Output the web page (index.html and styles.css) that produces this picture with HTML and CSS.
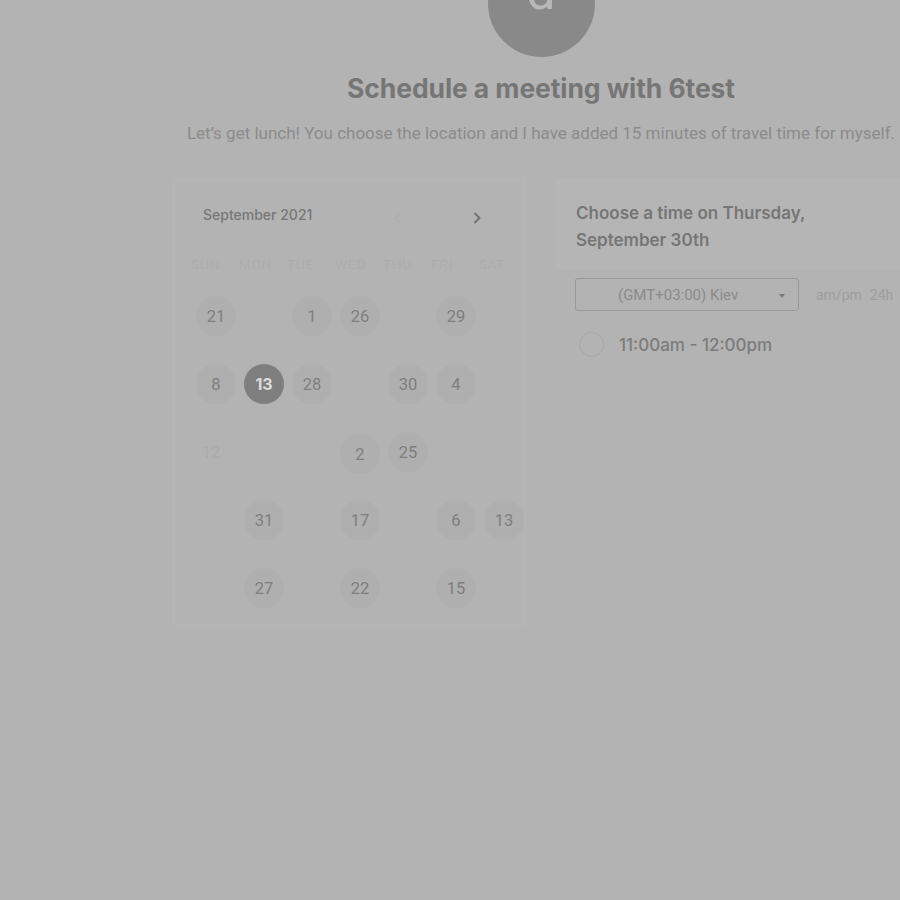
FILE: index.html
```html
<!DOCTYPE html>
<html>
<head>
<meta charset="utf-8">
<link rel="stylesheet" href="styles.css">
</head>
<body>
<div class="page">
  <header class="intro">
    <div class="avatar"><span>d</span></div>
    <h1 class="title">Schedule a meeting with 6test</h1>
    <p class="subtitle">Let’s get lunch! You choose the location and I have added 15 minutes of travel time for myself.</p>
  </header>
  <div class="main">
    <section class="calendar">
      <div class="cal-head">
        <span class="month">September 2021</span>
        <span class="nav prev"><svg width="8" height="12" viewBox="0 0 8 12"><path d="M6.5 1 1.5 6l5 5" fill="none" stroke="currentColor" stroke-width="1.6"/></svg></span>
        <span class="nav next"><svg width="8" height="12" viewBox="0 0 8 12"><path d="M1.5 1l5 5-5 5" fill="none" stroke="currentColor" stroke-width="1.8"/></svg></span>
      </div>
      <div class="grid">
        <div class="wd">SUN</div><div class="wd">MON</div><div class="wd">TUE</div><div class="wd">WED</div><div class="wd">THU</div><div class="wd">FRI</div><div class="wd">SAT</div>

        <div class="day">21</div><div class="empty"></div><div class="day">1</div><div class="day">26</div><div class="empty"></div><div class="day">29</div><div class="empty"></div>

        <div class="day">8</div><div class="day sel">13</div><div class="day">28</div><div class="empty"></div><div class="day">30</div><div class="day">4</div><div class="empty"></div>

        <div class="day off">12</div><div class="empty"></div><div class="empty"></div><div class="day low">2</div><div class="day">25</div><div class="empty"></div><div class="empty"></div>

        <div class="empty"></div><div class="day">31</div><div class="empty"></div><div class="day">17</div><div class="empty"></div><div class="day">6</div><div class="day">13</div>

        <div class="empty"></div><div class="day">27</div><div class="empty"></div><div class="day">22</div><div class="empty"></div><div class="day">15</div><div class="empty"></div>
      </div>
    </section>
    <section class="times">
      <div class="times-head">Choose a time on Thursday,<br>September 30th</div>
      <div class="tz-row">
        <div class="select">(GMT+03:00) Kiev<span class="caret"></span></div>
        <div class="fmt"><span>am/pm</span><span>24h</span></div>
      </div>
      <div class="slot"><span class="radio"></span><span class="slot-text">11:00am - 12:00pm</span></div>
    </section>
  </div>
</div>
</body>
</html>
```
FILE: styles.css
```css
html, body {
  margin: 0;
  padding: 0;
  background: #b3b3b3;
  overflow: hidden;
  height: 900px;
}
.page {
  width: 1082px;
  font-family: Inter, "Noto Sans", sans-serif;
}
.intro {
  display: flex;
  flex-direction: column;
  align-items: center;
}
.avatar {
  width: 107px;
  height: 107px;
  margin-top: -50px;
  border-radius: 50%;
  background: #898989;
  display: flex;
  justify-content: center;
  align-items: flex-start;
  overflow: hidden;
}
.avatar span {
  font-family: Roboto, sans-serif;
  font-size: 52px;
  line-height: 1;
  color: #b8b8b8;
  margin-top: 16px;
}
.title {
  margin: 14px 0 0;
  font-size: 26.5px;
  font-weight: 700;
  color: #767676;
  line-height: 34px;
  letter-spacing: -0.1px;
}
.subtitle {
  margin: 18px 0 0;
  font-family: Roboto, sans-serif;
  font-size: 17px;
  color: #8b8b8b;
  line-height: 20px;
}
.main {
  display: flex;
  margin: 36px 0 0 173px;
  gap: 32px;
  align-items: flex-start;
}
.calendar {
  width: 350px;
  height: 445px;
  border: 1px solid #b7b7b7;
  box-sizing: content-box;
}
.cal-head {
  display: flex;
  align-items: center;
  height: 30px;
  margin-top: 19px;
  padding-left: 29px;
}
.month {
  font-size: 14px;
  font-weight: 500;
  color: #777;
  width: 191px;
}
.nav {
  display: flex;
  align-items: center;
  margin-top: 8px;
}
.prev { color: #aeaeae; }
.next { color: #707070; margin-left: 71px; }
.grid {
  display: grid;
  grid-template-columns: repeat(7, 48px);
  grid-template-rows: 33px;
  grid-auto-rows: 68px;
  margin: 27px 0 0 18px;
}
.grid .wd {
  height: 26px;
  align-self: start;
  font-family: Roboto, sans-serif;
  font-size: 13.5px;
  font-weight: 300;
  letter-spacing: 1px;
  color: #ababab;
  margin-left: -1px;
}
.day, .empty {
  width: 40px;
  height: 40px;
  justify-self: center;
  align-self: start;
  margin-top: 7px;
}
.day {
  border-radius: 50%;
  background: #afafaf;
  display: flex;
  align-items: center;
  justify-content: center;
  font-family: Roboto, sans-serif;
  font-size: 16.5px;
  color: #7e7e7e;
}
.day.sel {
  background: #7e7e7e;
  color: #dcdcdc;
  font-family: Inter, sans-serif;
  font-weight: 700;
  font-size: 16px;
}
.day.off {
  background: transparent;
  color: #aaaaaa;
  margin-left: -10px;
}
.day.low { margin-top: 9px; }
.times {
  flex: 1;
}
.times-head {
  padding: 20px 19px 14px 18px;
  font-size: 17px;
  font-weight: 600;
  line-height: 27px;
  color: #767676;
  background: #b5b5b5;
  border: 1px solid #b7b7b7;
}
.tz-row {
  display: flex;
  align-items: center;
  margin: 9px 0 0 18px;
}
.select {
  width: 224px;
  height: 33px;
  border: 1px solid #979797;
  border-radius: 3px;
  display: flex;
  align-items: center;
  padding-left: 42px;
  box-sizing: border-box;
  position: relative;
  font-family: Roboto, sans-serif;
  font-size: 15px;
  color: #8a8a8a;
}
.caret {
  position: absolute;
  right: 13px;
  top: 15px;
  border-left: 3.5px solid transparent;
  border-right: 3.5px solid transparent;
  border-top: 4px solid #7a7a7a;
}
.fmt {
  display: flex;
  gap: 8px;
  margin-left: 17px;
  font-family: Roboto, sans-serif;
  font-size: 14px;
  color: #9d9d9d;
}
.slot {
  display: flex;
  align-items: center;
  margin: 21px 0 0 22px;
}
.radio {
  width: 25px;
  height: 25px;
  border-radius: 50%;
  border: 1px solid #a7a7a7;
  box-sizing: border-box;
}
.slot-text {
  margin-left: 15px;
  font-size: 17px;
  font-weight: 500;
  color: #7b7b7b;
}
```
